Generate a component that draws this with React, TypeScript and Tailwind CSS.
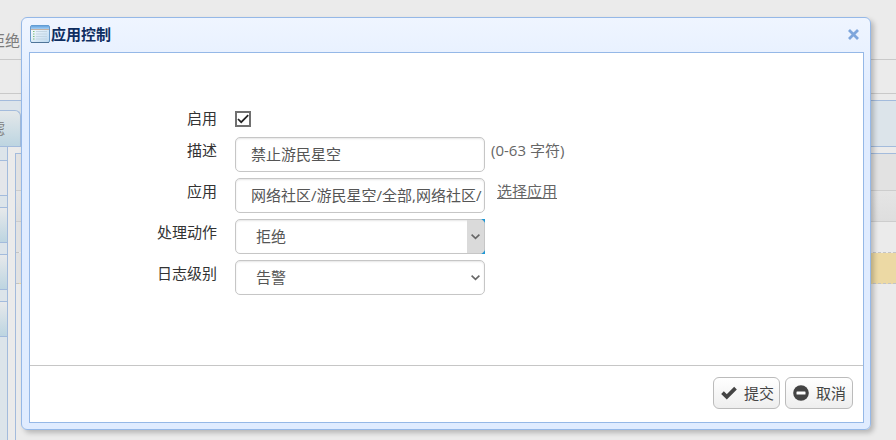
import { useState } from 'react';
import type { ReactNode } from 'react';
import clsx from 'clsx';

type FieldRowProps = {
  id: string;
  label: string;
  children: ReactNode;
  compact?: boolean;
};

const FieldRow = ({ id, label, children, compact }: FieldRowProps) => (
  <div className="flex items-start gap-[18px]">
    <label
      htmlFor={id}
      className={clsx('w-[187px] shrink-0 text-right text-[#333]', compact ? 'leading-[22px]' : 'leading-[26px]')}
    >
      {label}
    </label>
    {children}
  </div>
);

const fieldClass
  = 'h-[35px] w-[250px] rounded-[5px] border border-[#c6c6c6] bg-white text-[15px] text-[#555] shadow-[inset_0_1px_2px_rgba(0,0,0,0.1)] outline-none';

type SelectFieldProps = {
  id: string;
  options: string[];
  highlighted?: boolean;
};

const SelectField = ({ id, options, highlighted }: SelectFieldProps) => (
  <div className="relative flex">
    {highlighted && <span aria-hidden className="absolute inset-y-0 right-0 w-[10px] bg-[#1c97d5]" />}
    <select id={id} className={clsx(fieldClass, 'relative appearance-none pr-6 pl-5')}>
      {options.map(option => (
        <option key={option}>{option}</option>
      ))}
    </select>
    <span
      aria-hidden
      className={clsx(
        'pointer-events-none absolute inset-y-px right-px flex w-[17px] items-center justify-center rounded-r',
        highlighted && 'bg-[#dadada]',
      )}
    >
      <svg width="9" height="6" viewBox="0 0 9 6" fill="none" stroke="#666" strokeWidth="1.6">
        <path d="M.6 .7 4.5 4.4 8.4 .7" />
      </svg>
    </span>
  </div>
);

const WindowIcon = () => (
  <svg width="20" height="18" viewBox="0 0 20 18" aria-hidden>
    <defs>
      <linearGradient id="bar" x1="0" y1="0" x2="0" y2="1">
        <stop offset="0" stopColor="#5a9ede" />
        <stop offset="1" stopColor="#a9d0f2" />
      </linearGradient>
      <linearGradient id="pane" x1="0" y1="0" x2="1" y2="1">
        <stop offset="0" stopColor="#fff" />
        <stop offset="1" stopColor="#bcd9f0" />
      </linearGradient>
    </defs>
    <rect x=".5" y=".5" width="19" height="17" rx="1.5" fill="url(#pane)" stroke="#6b9bc8" />
    <path d="M1 .5h18v3.5H1z" fill="url(#bar)" />
    <path d="M1 4.5h18" stroke="#c3b3a6" />
    <path d="M3 6.5h1.5M3 9h1.5M3 11.5h1.5M3 14h1.5" stroke="#7fbf7a" />
    <path d="M6 6.5h11M6 9h11M6 11.5h11M6 14h11" stroke="#c3d5e2" />
    <path d="M1 17.5h18" stroke="#4f7599" />
  </svg>
);

const CheckIcon = () => (
  <svg width="16" height="14" viewBox="0 0 16 14" fill="none" stroke="#444" strokeWidth="3.8" aria-hidden>
    <path d="m1.5 6.6 4.3 4.2 8.7-8.6" />
  </svg>
);

const MinusIcon = () => (
  <svg width="16" height="16" viewBox="0 0 16 16" aria-hidden>
    <circle cx="8" cy="8" r="7.8" fill="#444" />
    <rect x="3.5" y="6.5" width="9" height="3" rx=".6" fill="#fff" />
  </svg>
);

const SideItem = () => (
  <div className="h-9 border-y border-[#a3bbdc] bg-linear-to-b from-[#e7e9eb] to-[#bdd5e1]" />
);

const Backdrop = () => (
  <div aria-hidden className="flex min-h-screen flex-col overflow-hidden bg-[#ebebeb] text-[15px] text-[#7c7c7c]">
    <div className="h-[60px] border-b border-[#c9c9c9] pt-7">
      <div className="flex w-5 justify-end leading-6 whitespace-nowrap">拒绝</div>
    </div>
    <div className="h-[34px] border-b border-[#c9c9c9]" />
    <div className="mt-1.5 flex h-[47px] items-end border-y border-[#a3bbdc] bg-[#dce4ea]">
      <div className="flex h-9 w-[21px] items-center justify-end rounded-tr-md border-t border-r border-[#a3bbdc] bg-linear-to-b from-[#e4e8ea] to-[#bdd5e1] pr-[15px] whitespace-nowrap">
        过滤
      </div>
    </div>
    <div className="flex flex-1">
      <div className="flex w-2 flex-col gap-[11px] border-r border-[#a3bbdc] bg-[#dce4ea] pt-[13px]">
        <div className="h-9 border-y border-[#a3bbdc] bg-[#e4e6ea]" />
        <SideItem />
        <SideItem />
        <SideItem />
      </div>
      <div className="mt-1.5 ml-[7px] flex-1 border-t border-l border-[#a3bbdc]">
        <div className="h-[37px] border-b border-[#cdcdcd] bg-[#e2e2e2]" />
        <div className="h-[31px] border-b border-[#cdcdcd] bg-linear-to-b from-[#e5e5e5] to-[#dedede]" />
        <div className="h-[31px] border-b border-dashed border-[#c4c4c4]">
          <div className="h-full w-[5px] bg-[#e2e2e2]" />
        </div>
        <div className="h-[31px] border-b border-dashed border-[#c4c4c4] bg-[#ecd9a4]">
          <div className="h-full w-[5px] bg-[#e2e2e2]" />
        </div>
      </div>
    </div>
  </div>
);

const buttonClass
  = 'flex h-8 items-center gap-[7px] rounded-[6px] border border-[#bbb] bg-linear-to-b from-white to-[#eee] text-[15px] text-[#444]';

const App = () => {
  const [enabled, setEnabled] = useState(true);

  return (
    <div className="relative min-h-screen overflow-hidden font-['Open_Sans','Noto_Sans_CJK_SC',sans-serif]">
      <Backdrop />
      <div className="absolute inset-0 flex pt-[17px] pr-[25px] pb-[10px] pl-[21px]">
        <div
          role="dialog"
          aria-labelledby="dialog-title"
          className="flex flex-1 flex-col rounded-[6px] border border-[#95b8e7] bg-linear-to-b from-[#eff5ff] to-[#e0ecff] to-20% pr-[6px] pb-[6px] pl-[7px] shadow-[3px_3px_5px_rgba(0,0,0,0.22)]"
        >
          <div className="flex h-[34px] shrink-0 items-center gap-px pr-[5px] pb-[2px] pl-px">
            <WindowIcon />
            <h1 id="dialog-title" className="flex-1 text-[15px] font-bold text-[#0e2d5f]">应用控制</h1>
            <button type="button" aria-label="关闭" className="flex">
              <svg width="11" height="11" viewBox="0 0 11 11" fill="none" stroke="#7ea6dc" strokeWidth="2.8">
                <path d="m1 1 9 9M10 1l-9 9" />
              </svg>
            </button>
          </div>

          <form
            className="flex flex-1 flex-col border border-[#95b8e7] bg-white text-[15px]"
            onSubmit={e => e.preventDefault()}
          >
            <div className="flex flex-1 flex-col gap-[6px] pt-[54px]">
              <FieldRow id="enabled" label="启用" compact>
                <span className="relative flex py-1">
                  <input
                    id="enabled"
                    type="checkbox"
                    checked={enabled}
                    onChange={e => setEnabled(e.target.checked)}
                    className="size-4 appearance-none border-2 border-[#707070] bg-white"
                  />
                  {enabled && (
                    <svg
                      width="16"
                      height="16"
                      viewBox="0 0 16 16"
                      fill="none"
                      stroke="#222"
                      strokeWidth="1.7"
                      className="pointer-events-none absolute top-1 left-0"
                      aria-hidden
                    >
                      <path d="m3 8 3.2 3.2 7-7" />
                    </svg>
                  )}
                </span>
              </FieldRow>
              <FieldRow id="description" label="描述">
                <div className="flex gap-[6px]">
                  <input
                    id="description"
                    type="text"
                    defaultValue="禁止游民星空"
                    className={clsx(fieldClass, 'pr-[2px] pb-[2px] pl-[15px]')}
                  />
                  <span className="leading-[26px] text-[#666]">(0-63 字符)</span>
                </div>
              </FieldRow>
              <FieldRow id="application" label="应用">
                <div className="flex gap-3">
                  <input
                    id="application"
                    type="text"
                    defaultValue="网络社区/游民星空/全部,网络社区/游民星空/论坛"
                    className={clsx(fieldClass, 'pr-[2px] pb-[2px] pl-[15px]')}
                  />
                  <a href="#applications" className="leading-[26px] text-[#666] underline">选择应用</a>
                </div>
              </FieldRow>
              <FieldRow id="action" label="处理动作">
                <SelectField id="action" options={['拒绝', '允许']} highlighted />
              </FieldRow>
              <FieldRow id="level" label="日志级别">
                <SelectField id="level" options={['告警', '通知', '信息']} />
              </FieldRow>
            </div>

            <div className="flex justify-end gap-[5px] border-t border-[#c6c6c6] pt-[11px] pr-[10px] pb-[13px]">
              <button type="submit" className={clsx(buttonClass, 'pr-[5px] pl-[7px]')}>
                <CheckIcon />
                提交
              </button>
              <button type="button" className={clsx(buttonClass, 'pr-[6px] pl-[7px]')}>
                <MinusIcon />
                取消
              </button>
            </div>
          </form>
        </div>
      </div>
    </div>
  );
};

export default App;
